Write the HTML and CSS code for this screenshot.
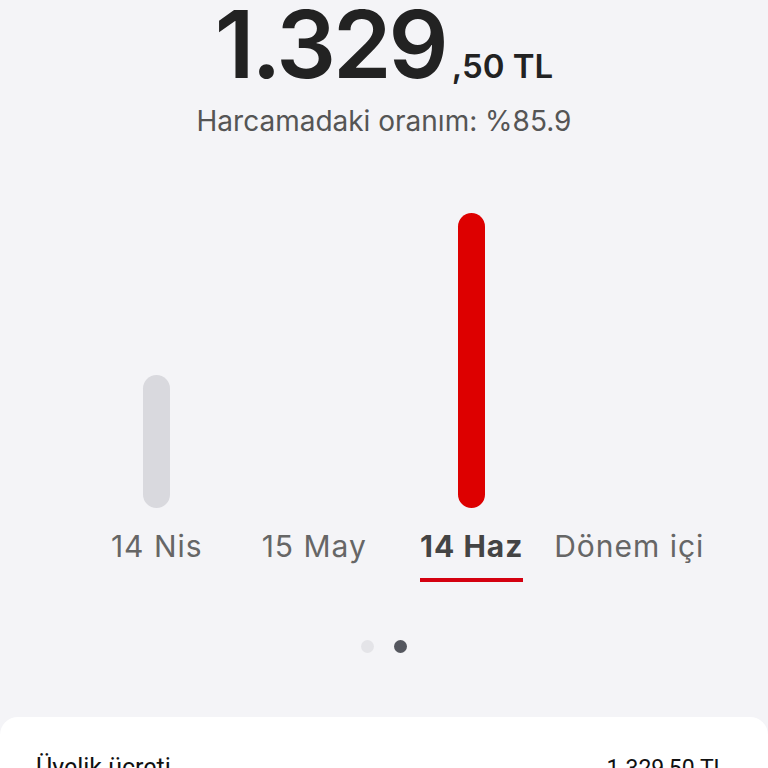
FILE: index.html
```html
<!DOCTYPE html>
<html lang="tr">
<head>
<meta charset="utf-8">
<link rel="stylesheet" href="styles.css">
</head>
<body>
<div class="page">
  <div class="amount">
    <span class="amount-int">1.329</span>
    <span class="amount-dec">,50 TL</span>
  </div>
  <div class="ratio">Harcamadaki oranım: %85.9</div>

  <div class="chart">
    <div class="col">
      <div class="bar-area"><div class="bar bar-grey" style="height:133px"></div></div>
      <div class="label">14 Nis</div>
    </div>
    <div class="col">
      <div class="bar-area"></div>
      <div class="label">15 May</div>
    </div>
    <div class="col col-active">
      <div class="bar-area"><div class="bar bar-red" style="height:295px"></div></div>
      <div class="label">14 Haz</div>
    </div>
    <div class="col">
      <div class="bar-area"></div>
      <div class="label">Dönem içi</div>
    </div>
  </div>

  <div class="dots">
    <span class="dot"></span>
    <span class="dot dot-active"></span>
  </div>

  <div class="card">
    <div class="row">
      <span class="row-title">Üyelik ücreti</span>
      <span class="row-value">1.329,50 TL</span>
    </div>
  </div>
</div>
</body>
</html>
```
FILE: styles.css
```css
html, body {
  margin: 0;
  padding: 0;
  background: #f4f4f7;
}
body {
  font-family: Inter, "Noto Sans", sans-serif;
  color: #222;
  width: 768px;
  height: 768px;
  overflow: hidden;
}
.page {
  display: flex;
  flex-direction: column;
}
.amount {
  display: flex;
  justify-content: center;
  align-items: baseline;
  height: 96px;
  margin-top: -6px;
}
.amount-int {
  font-size: 94px;
  font-weight: 600;
  letter-spacing: -3px;
  line-height: 100px;
  color: #222;
}
.amount-dec {
  font-size: 33px;
  font-weight: 600;
  margin-left: 6px;
  color: #222;
}
.ratio {
  text-align: center;
  font-size: 28px;
  color: #555;
  margin-top: 14px;
  line-height: 34px;
}
.chart {
  display: flex;
  padding-left: 78px;
  margin-top: 75px;
}
.col {
  width: 157.5px;
  display: flex;
  flex-direction: column;
  align-items: center;
}
.bar-area {
  height: 295px;
  display: flex;
  align-items: flex-end;
  justify-content: center;
}
.bar {
  width: 27px;
  border-radius: 14px;
}
.bar-grey { background: #d9d9de; }
.bar-red { background: #dd0000; }
.label {
  margin-top: 20px;
  font-size: 30px;
  letter-spacing: 1px;
  line-height: 36px;
  color: #666;
  white-space: nowrap;
  padding-bottom: 14px;
  border-bottom: 4px solid transparent;
}
.col-active .label {
  font-weight: 700;
  color: #444;
  border-bottom-color: #d40010;
}
.dots {
  display: flex;
  justify-content: center;
  gap: 20px;
  margin-top: 58px;
}
.dot {
  width: 13px;
  height: 13px;
  border-radius: 50%;
  background: #e4e4e8;
}
.dot-active {
  background: #55575f;
}
.card {
  margin-top: 64px;
  background: #fff;
  border-radius: 18px 18px 0 0;
  padding: 36px 42px 0 36px;
  height: 120px;
}
.row {
  display: flex;
  justify-content: space-between;
  align-items: baseline;
  font-family: Roboto, sans-serif;
  color: #111;
}
.row-title {
  font-size: 25px;
}
.row-value {
  font-size: 23px;
}
```
